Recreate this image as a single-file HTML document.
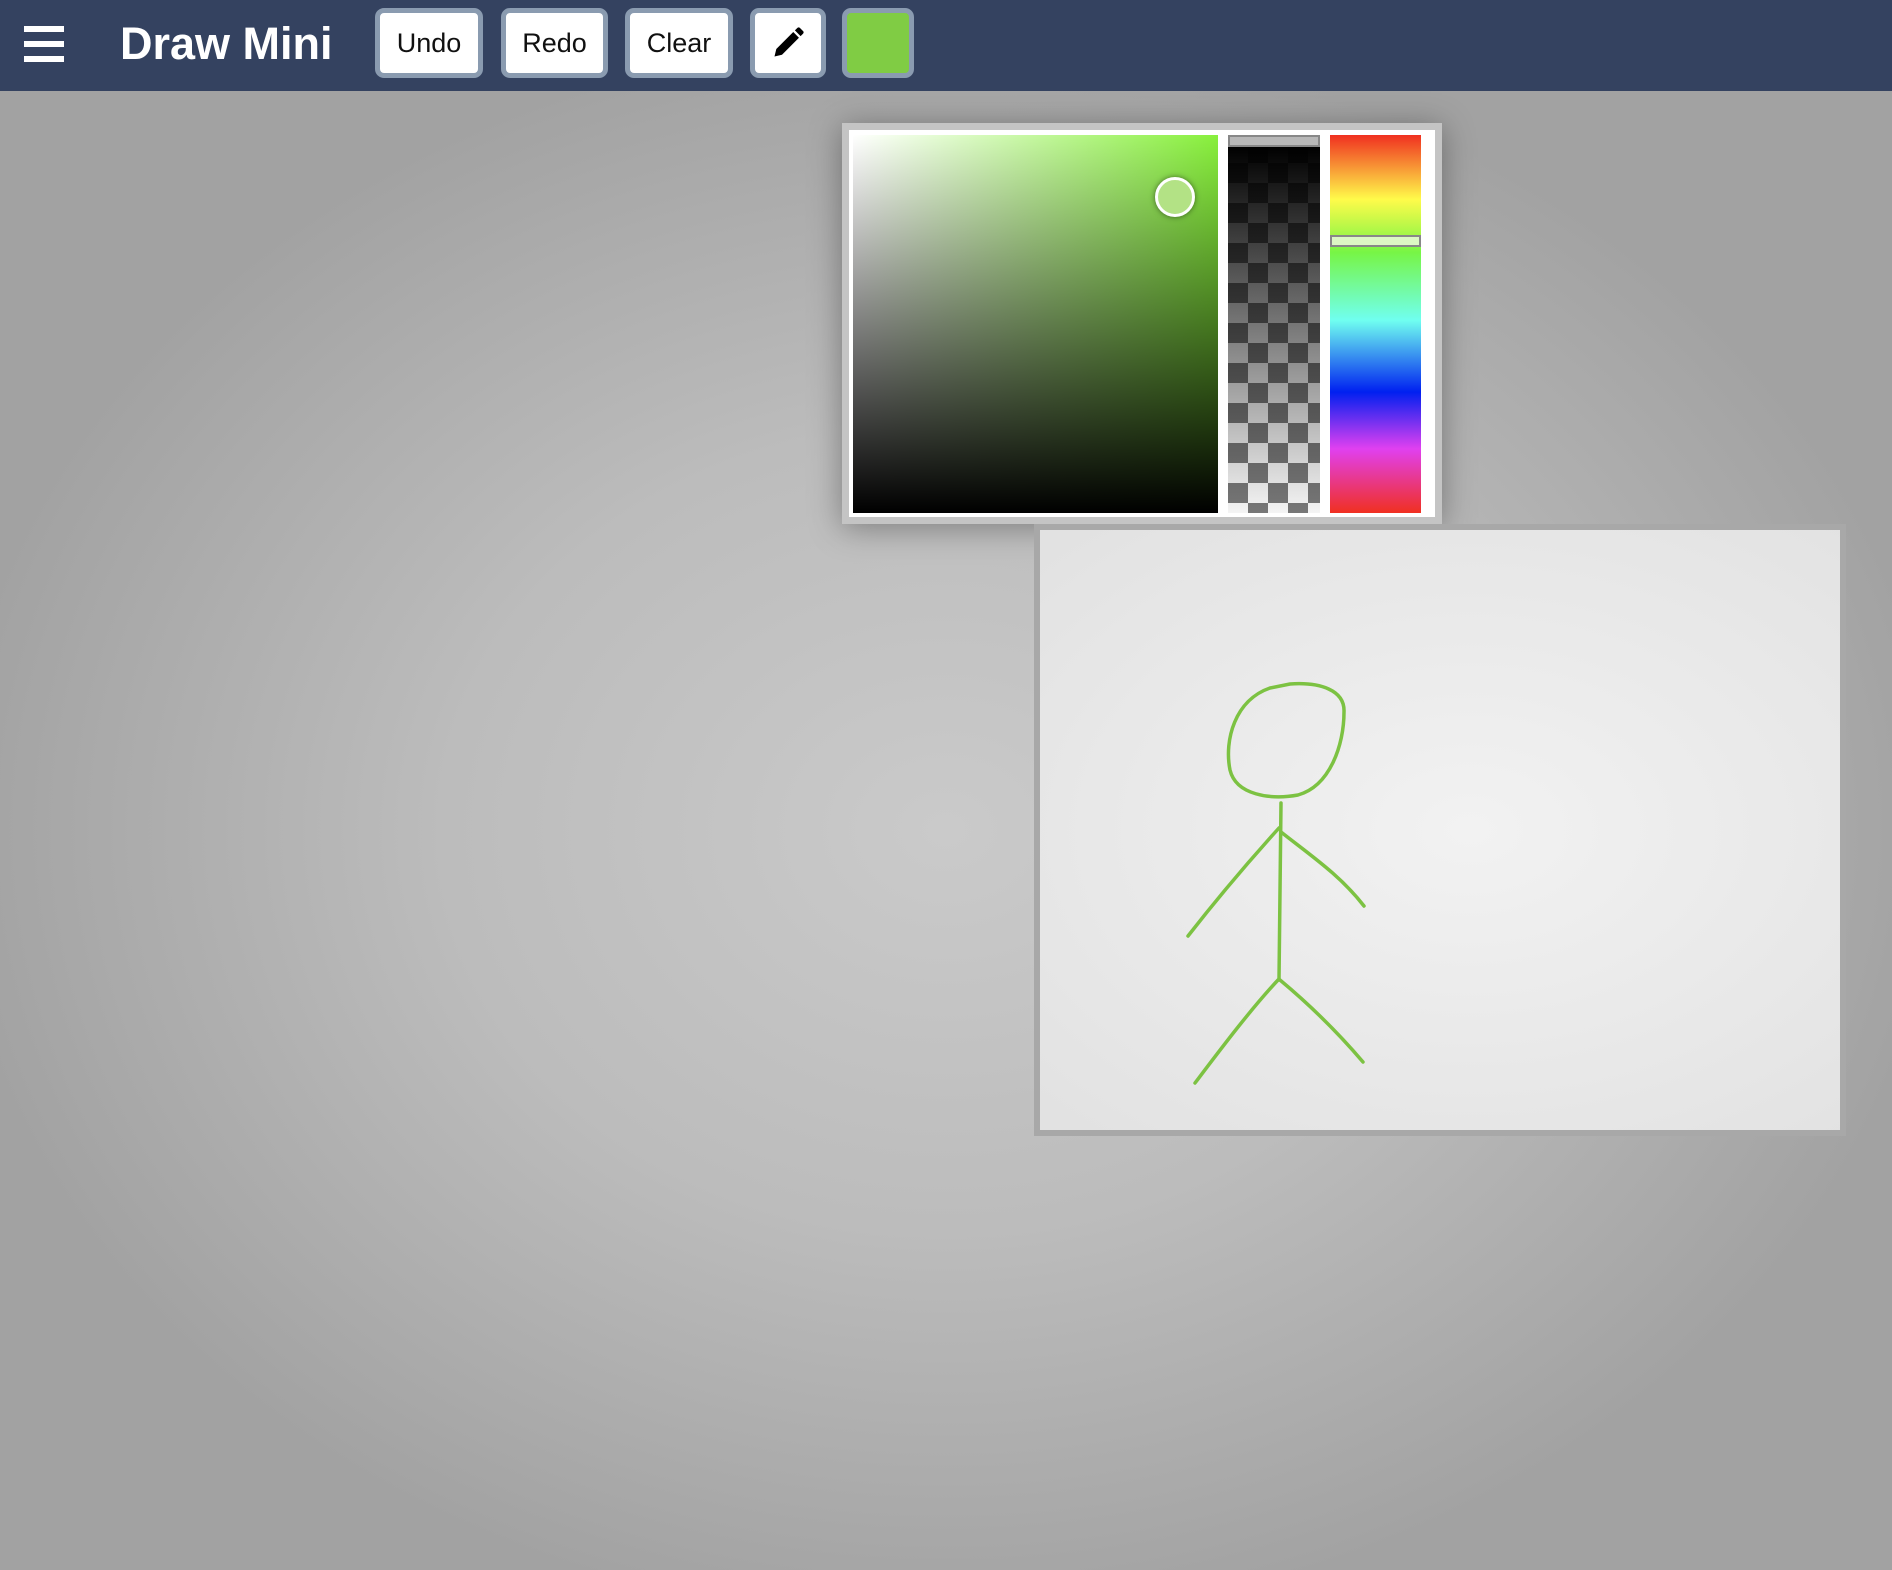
<!DOCTYPE html>
<html><head><meta charset="utf-8"><style>
*{margin:0;padding:0;box-sizing:border-box}
html,body{width:1892px;height:1570px;overflow:hidden}
body{background:radial-gradient(ellipse 1000px 800px at 946px 830px,#cacaca 0%,#bcbcbc 50%,#a2a2a2 100%);font-family:"Liberation Sans",sans-serif;position:relative}
.hdr{position:absolute;left:0;top:0;width:1892px;height:91px;background:#344260}
.hb{position:absolute;left:24px;width:40px;height:6px;background:#fff}
.title{position:absolute;left:120px;top:18px;color:#fff;font-weight:bold;font-size:45px}
.btn{position:absolute;top:8px;height:70px;background:#fff;border:5px solid #8a9bb0;border-radius:9px;font-size:27px;color:#111;display:flex;align-items:center;justify-content:center}
.pop{position:absolute;left:842px;top:123px;width:600px;height:401px;background:#fff;border:7px solid #c4c4c4;box-shadow:0 4px 30px rgba(0,0,0,.35)}
.sv{position:absolute;left:853px;top:135px;width:365px;height:378px;background:linear-gradient(to top,#000,rgba(0,0,0,0)),linear-gradient(to right,#fff,#88f03c)}
.al{position:absolute;left:1228px;top:135px;width:92px;height:378px;background:linear-gradient(to bottom,#000 3%,rgba(0,0,0,0) 100%),conic-gradient(#777 25%,#f4f4f4 0 50%,#777 0 75%,#f4f4f4 0) 0 8px/40px 40px}
.alh{position:absolute;left:1228px;top:135px;width:92px;height:12px;background:#b8b8b8;border:2px solid #888}
.hue{position:absolute;left:1330px;top:135px;width:91px;height:378px;background:linear-gradient(to bottom,#f03020 0%,#fffb4a 17%,#77f545 31%,#70fff0 49%,#0020f0 68%,#e040f0 83%,#f03020 100%)}
.hueh{position:absolute;left:1330px;top:235px;width:91px;height:12px;background:#dcf8c4;border:2px solid #888}
.cv{position:absolute;left:1034px;top:524px;width:812px;height:612px;border:6px solid #a8a8a8;background:radial-gradient(ellipse 600px 400px at 430px 300px,#f2f2f2 0%,#e2e2e2 100%)}
</style></head><body>
<div class="hdr">
<div class="hb" style="top:26px"></div><div class="hb" style="top:41px"></div><div class="hb" style="top:56px"></div>
<div class="title">Draw Mini</div>
<div class="btn" style="left:375px;width:108px">Undo</div>
<div class="btn" style="left:501px;width:107px">Redo</div>
<div class="btn" style="left:625px;width:108px">Clear</div>
<div class="btn" style="left:750px;width:76px"><svg width="36" height="36" viewBox="0 0 24 24"><path d="M3 21l1.2-5L15.5 4.7l3.8 3.8L8 19.8z M16.6 3.6l1.6-1.6a1.3 1.3 0 0 1 1.8 0l2 2a1.3 1.3 0 0 1 0 1.8l-1.6 1.6z" fill="#000"/></svg></div>
<div class="btn" style="left:842px;width:72px;background:#80cc44"></div>
</div>
<div class="pop"></div>
<div class="sv"></div>
<div style="position:absolute;left:1155px;top:177px;width:40px;height:40px;border-radius:50%;background:#b3e285;border:3px solid #fff;box-shadow:0 0 6px rgba(0,0,0,.5)"></div>
<div class="al"></div><div class="alh"></div>
<div class="hue"></div><div class="hueh"></div>
<div class="cv"></div>
<svg style="position:absolute;left:0;top:0" width="1892" height="1570">
<g fill="none" stroke="#7cc242" stroke-width="3.5" stroke-linecap="round" stroke-linejoin="round">
<path d="M1290 684 C1320 682 1345 690 1344 712 C1344 745 1330 786 1298 795 C1270 800 1236 795 1230 770 C1224 740 1235 700 1270 688 Z"/>
<path d="M1281 803 L1279 980"/>
<path d="M1279 828 C1250 860 1220 895 1188 936"/>
<path d="M1281 832 C1310 855 1340 875 1364 906"/>
<path d="M1278 980 C1250 1010 1220 1050 1195 1083"/>
<path d="M1280 980 C1310 1005 1340 1035 1363 1062"/>
</g></svg>
</body></html>
